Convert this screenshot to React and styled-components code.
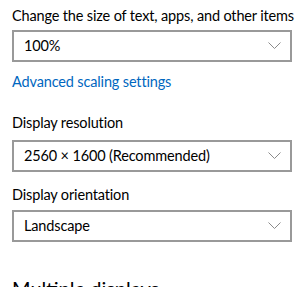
import React from "react";
import styled, { createGlobalStyle } from "styled-components";

const Global = createGlobalStyle`
  html, body { margin: 0; padding: 0; background: #fff; }
  body { font-family: "Lato", "Noto Sans", sans-serif; color: #000; overflow: hidden; }
`;

const Page = styled.div`
  width: 308px;
  height: 287px;
  overflow: hidden;
  padding: 0 16px 0 12px;
  box-sizing: border-box;
  display: flex;
  flex-direction: column;
  align-items: flex-start;
  & > * { flex-shrink: 0; }
`;

const Label = styled.div`
  font-size: 14.5px;
  letter-spacing: -0.15px;
  line-height: 20px;
  margin-top: ${(p) => p.$top}px;
  margin-bottom: ${(p) => p.$bottom}px;
  white-space: nowrap;
`;

const Select = styled.div`
  box-sizing: border-box;
  width: 280px;
  height: 32px;
  border: 2px solid #999;
  display: flex;
  align-items: center;
  justify-content: space-between;
  padding: 0 9px 1px 10px;
  font-size: 14.5px;
  letter-spacing: -0.15px;
  line-height: 20px;
`;

const Link = styled.a`
  font-size: 14.5px;
  letter-spacing: -0.15px;
  line-height: 20px;
  color: #0067c0;
  text-decoration: none;
  margin-top: 10px;
  white-space: nowrap;
`;

const Heading = styled.div`
  font-size: 20px;
  line-height: 28px;
  margin-top: 32px;
  white-space: nowrap;
`;

const Chevron = () => (
  <svg width="13" height="7" viewBox="0 0 13 7">
    <path d="M0.5 0.5 L6.5 6.5 L12.5 0.5" fill="none" stroke="#8a8a8a" strokeWidth="1" />
  </svg>
);

const Dropdown = ({ value }) => (
  <Select>
    <span>{value}</span>
    <Chevron />
  </Select>
);

export default function App() {
  return (
    <>
      <Global />
      <Page>
        <Label $top={6} $bottom={4}>Change the size of text, apps, and other items</Label>
        <Dropdown value="100%" />
        <Link href="#">Advanced scaling settings</Link>
        <Label $top={21} $bottom={7}>Display resolution</Label>
        <Dropdown value="2560 × 1600 (Recommended)" />
        <Label $top={13} $bottom={5}>Display orientation</Label>
        <Dropdown value="Landscape" />
        <Heading>Multiple displays</Heading>
      </Page>
    </>
  );
}
